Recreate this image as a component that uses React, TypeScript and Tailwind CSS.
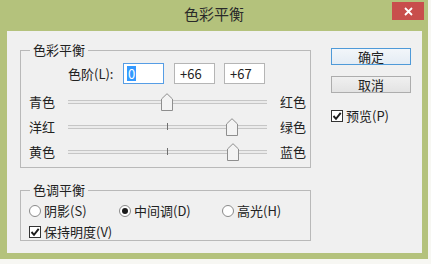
import type { CSSProperties, ReactNode } from "react";

const FONT = "font-['Noto_Sans_CJK_SC','Noto_Sans',sans-serif]";

function GroupBox({ title, className, children }: { title: string; className: string; children: ReactNode }) {
  return (
    <div className={`relative border border-[#b9b9b9] ${className}`}>
      <span className="absolute left-[9px] top-[-10px] bg-[#f0f0f0] px-[3px] leading-[18px]">{title}</span>
      {children}
    </div>
  );
}

function Thumb({ style }: { style: CSSProperties }) {
  return (
    <svg className="absolute top-[-8px]" style={style} width="12" height="18" viewBox="0 0 12 18">
      <path d="M0.5 17.5 V6 L6 0.7 L11.5 6 V17.5 Z" fill="#f3f3f3" stroke="#8e8e8e" />
    </svg>
  );
}

function Slider({ left, right, value, tick }: { left: string; right: string; value: number; tick?: boolean }) {
  const pos = 99 + value;
  return (
    <div className="flex h-[25px] items-center pl-[8px]">
      <span className="w-[39px] leading-none">{left}</span>
      <div className="relative h-[4px] w-[199px] border-y border-[#c6c6c6] bg-[#ebebeb]">
        {tick && <div className="absolute left-[99px] top-[-3px] h-[7px] w-px bg-[#6f6f6f]" />}
        <Thumb style={{ left: pos - 6 }} />
      </div>
      <span className="ml-[13px] leading-none">{right}</span>
    </div>
  );
}

function NumBox({ children, focused }: { children: ReactNode; focused?: boolean }) {
  return (
    <div
      className={`flex h-[21px] w-[41px] items-center bg-white pl-[3px] ${
        focused ? "border border-[#569de5]" : "border border-[#b5b5b5]"
      }`}
    >
      {children}
    </div>
  );
}

function CheckBox() {
  return (
    <span className="flex h-[12px] w-[12px] items-center justify-center border border-[#333] bg-white">
      <svg width="10" height="10" viewBox="0 0 10 10">
        <path d="M1.5 5 L4 7.8 L8.7 1.8" fill="none" stroke="#1a1a1a" strokeWidth="1.9" />
      </svg>
    </span>
  );
}

function Radio({ checked, label, width }: { checked?: boolean; label: string; width: string }) {
  return (
    <div className={`flex items-center ${width}`}>
      <span className="flex h-[12px] w-[12px] items-center justify-center rounded-full border border-[#8a8a8a] bg-white">
        {checked && <span className="h-[6px] w-[6px] rounded-full bg-[#1a1a1a]" />}
      </span>
      <span className="ml-[3px] leading-none">{label}</span>
    </div>
  );
}

export default function App() {
  return (
    <div className={`h-[264px] w-[431px] bg-[#f7f7f3] text-[13px] text-[#222] ${FONT}`}>
      <div className="h-[259px] w-[428px] bg-[#b4c27c]">
        <div className="grid h-[31px] grid-cols-[1fr_auto_1fr]">
          <div />
          <div className="pt-[4px] text-[15px] leading-[20px] text-[#2a2a2a]">色彩平衡</div>
          <div className="flex justify-end pr-[4px] pt-[2px]">
            <div className="flex h-[18px] w-[32px] items-center justify-center bg-[#c84e4c]">
              <svg width="9" height="9" viewBox="0 0 9 9">
                <path d="M1 1 L8 8 M8 1 L1 8" stroke="#fff" strokeWidth="1.8" />
              </svg>
            </div>
          </div>
        </div>

        <div className="ml-[7px] flex h-[222px] w-[415px] bg-[#f0f0f0]">
          <div className="flex flex-col pl-[13px] pt-[19px]">
            <GroupBox title="色彩平衡" className="h-[118px] w-[291px]">
              <div className="flex items-center pl-[47px] pt-[12px]">
                <span className="w-[55px] leading-none">色阶(L):</span>
                <NumBox focused>
                  <span className="bg-[#3399ff] px-px text-[13px] leading-[15px] text-white">0</span>
                </NumBox>
                <div className="ml-[10px]">
                  <NumBox>
                    <span className="pl-[2px] leading-none">+66</span>
                  </NumBox>
                </div>
                <div className="ml-[9px]">
                  <NumBox>
                    <span className="pl-[2px] leading-none">+67</span>
                  </NumBox>
                </div>
              </div>
              <div className="mt-[5px]">
                <Slider left="青色" right="红色" value={0} />
                <Slider left="洋红" right="绿色" value={65} tick />
                <Slider left="黄色" right="蓝色" value={66} tick />
              </div>
            </GroupBox>

            <GroupBox title="色调平衡" className="mt-[22px] h-[51px] w-[291px]">
              <div className="flex pl-[8px] pt-[13px]">
                <Radio label="阴影(S)" width="w-[90px]" />
                <Radio label="中间调(D)" width="w-[103px]" checked />
                <Radio label="高光(H)" width="w-[80px]" />
              </div>
              <div className="flex items-center pl-[8px] pt-[8px]">
                <CheckBox />
                <span className="ml-[3px] leading-none">保持明度(V)</span>
              </div>
            </GroupBox>
          </div>

          <div className="ml-[20px] flex flex-col pt-[17px]">
            <div className="flex h-[17px] w-[80px] items-center justify-center border border-[#4f9ad8] bg-gradient-to-b from-[#f2f6fa] to-[#e4ecf4] leading-none">
              确定
            </div>
            <div className="mt-[11px] flex h-[17px] w-[80px] items-center justify-center border border-[#adadad] bg-gradient-to-b from-[#f0f0f0] to-[#e3e3e3] leading-none">
              取消
            </div>
            <div className="mt-[16px] flex items-center">
              <CheckBox />
              <span className="ml-[3px] leading-none">预览(P)</span>
            </div>
          </div>
        </div>
      </div>
    </div>
  );
}
